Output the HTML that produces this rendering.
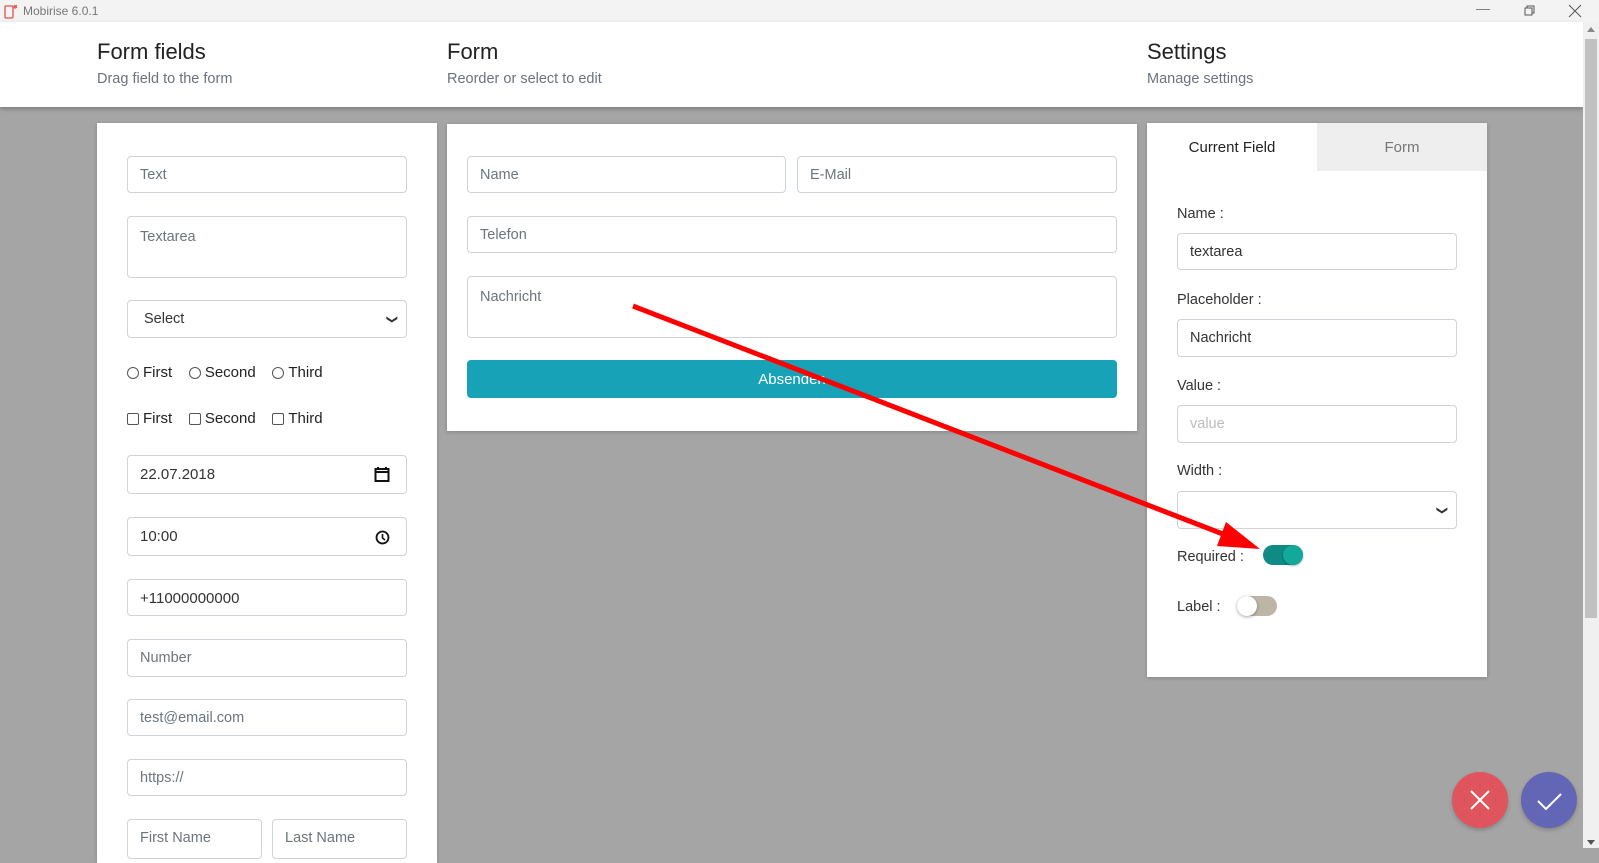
<!DOCTYPE html>
<html><head><meta charset="utf-8"><style>
*{box-sizing:border-box;margin:0;padding:0}
body{width:1599px;height:848px;overflow:hidden;background:#a5a5a5;font-family:"Liberation Sans",sans-serif;position:relative}
.abs{position:absolute}
.tb{left:0;top:0;width:1599px;height:22px;background:#f3f3f3;font-size:12px;color:#777}
.hdr{left:0;top:22px;width:1583px;height:85px;background:#fff;box-shadow:0 2px 4px rgba(0,0,0,.25)}
.h1{font-size:22px;color:#222}
.h2{font-size:14.5px;color:#6b7280}
.panel{background:#fff;box-shadow:0 1px 4px rgba(0,0,0,.2)}
.in{position:absolute;border:1px solid #ced4da;border-radius:4px;background:#fff;font-size:14.5px;color:#6c757d;padding-left:12px;line-height:37px}
.lbl{position:absolute;font-size:14.5px;color:#333;margin-top:2px}
.opt{position:absolute;font-size:15px;color:#222;display:flex;align-items:center}
.r{width:12px;height:12px;border:1px solid #555;border-radius:50%;display:inline-block;margin-right:4px}
.c{width:12px;height:12px;border:1px solid #555;border-radius:2px;display:inline-block;margin-right:4px}
.chev{position:absolute;right:10px;top:0;font-size:11px;color:#333;transform:rotate(90deg)}
</style></head><body>
<div class="abs tb"><svg class="abs" style="left:4px;top:3px" width="16" height="16"><rect x="1" y="3" width="8" height="12" rx="1" fill="none" stroke="#e05050" stroke-width="1.3"/><path d="M11 2v4M9 4h4M10 2l3 3M13 2l-3 3" stroke="#e05050" stroke-width="1"/></svg><span class="abs" style="left:23px;top:4px">Mobirise 6.0.1</span>
<span class="abs" style="left:1476px;top:0;font-size:14px">—</span>
<svg class="abs" style="left:1524px;top:5px" width="12" height="12"><rect x="1" y="3" width="7" height="7" fill="none" stroke="#555"/><path d="M3 3V1h7v7H8" fill="none" stroke="#555"/></svg>
<svg class="abs" style="left:1568px;top:4px" width="14" height="14"><path d="M1 1l12 12M13 1L1 13" stroke="#555"/></svg></div>
<div class="abs hdr">
<div class="abs h1" style="left:97px;top:17px">Form fields</div><div class="abs h2" style="left:97px;top:49px">Drag field to the form</div>
<div class="abs h1" style="left:447px;top:17px">Form</div><div class="abs h2" style="left:447px;top:49px">Reorder or select to edit</div>
<div class="abs h1" style="left:1147px;top:17px">Settings</div><div class="abs h2" style="left:1147px;top:49px">Manage settings</div>
</div>
<div class="abs" style="left:1583px;top:22px;width:16px;height:826px;background:#f0f0f0"><div class="abs" style="left:2px;top:17px;width:12px;height:579px;background:#c1c1c1"></div><div class="abs" style="left:4px;top:5px;border:4px solid transparent;border-bottom:5px solid #888;border-top:0"></div><div class="abs" style="left:4px;top:818px;border:4px solid transparent;border-top:5px solid #555;border-bottom:0"></div></div>

<div class="abs panel" style="left:97px;top:123px;width:340px;height:740px">
<div class="in" style="left:30px;top:33px;width:280px;height:37px">Text</div>
<div class="in" style="left:30px;top:93px;width:280px;height:62px;line-height:20px;padding-top:10px">Textarea</div>
<div class="in" style="left:30px;top:177px;width:280px;height:38px;color:#333;padding-left:16px">Select<span class="chev">&#10095;</span></div>
<div class="opt" style="left:30px;top:241px"><span class="r"></span>First&nbsp;&nbsp;&nbsp;&nbsp;<span class="r"></span>Second&nbsp;&nbsp;&nbsp;&nbsp;<span class="r"></span>Third</div>
<div class="opt" style="left:30px;top:287px"><span class="c"></span>First&nbsp;&nbsp;&nbsp;&nbsp;<span class="c"></span>Second&nbsp;&nbsp;&nbsp;&nbsp;<span class="c"></span>Third</div>
<div class="in" style="left:30px;top:332px;width:280px;height:39px;color:#333;font-size:15px">22.07.2018<svg class="abs" style="right:16px;top:10px" width="16" height="17"><rect x="1.5" y="3" width="13" height="12" fill="none" stroke="#111" stroke-width="2"/><path d="M1 6h14M4 1v3M12 1v3" stroke="#111" stroke-width="2"/></svg></div>
<div class="in" style="left:30px;top:394px;width:280px;height:39px;color:#333;font-size:15px">10:00<svg class="abs" style="right:16px;top:12px" width="15" height="15"><circle cx="7.5" cy="7.5" r="6" fill="none" stroke="#111" stroke-width="1.8"/><path d="M7.5 4v4l2.5 2" fill="none" stroke="#111" stroke-width="1.6"/></svg></div>
<div class="in" style="left:30px;top:456px;width:280px;height:37px;color:#333;font-size:15px">+11000000000</div>
<div class="in" style="left:30px;top:516px;width:280px;height:38px">Number</div>
<div class="in" style="left:30px;top:576px;width:280px;height:37px">test@email.com</div>
<div class="in" style="left:30px;top:636px;width:280px;height:37px">https://</div>
<div class="in" style="left:30px;top:696px;width:135px;height:40px">First Name</div>
<div class="in" style="left:175px;top:696px;width:135px;height:40px">Last Name</div>
</div>

<div class="abs panel" style="left:447px;top:124px;width:690px;height:307px">
<div class="in" style="left:20px;top:32px;width:319px;height:37px">Name</div>
<div class="in" style="left:350px;top:32px;width:320px;height:37px">E-Mail</div>
<div class="in" style="left:20px;top:92px;width:650px;height:37px">Telefon</div>
<div class="in" style="left:20px;top:152px;width:650px;height:62px;line-height:20px;padding-top:10px">Nachricht</div>
<div class="abs" style="left:20px;top:236px;width:650px;height:38px;background:#17a2b8;border-radius:4px;color:#fff;font-size:15px;text-align:center;line-height:40px">Absenden</div>
</div>

<div class="abs panel" style="left:1147px;top:123px;width:340px;height:554px">
<div class="abs" style="left:170px;top:0;width:170px;height:48px;background:#eee;color:#777;font-size:15px;text-align:center;line-height:50px">Form</div>
<div class="abs" style="left:0;top:0;width:170px;height:48px;color:#222;font-size:15px;text-align:center;line-height:50px">Current Field</div>
<div class="lbl" style="left:30px;top:81px">Name :</div>
<div class="in" style="left:30px;top:110px;width:280px;height:37px;color:#333">textarea</div>
<div class="lbl" style="left:30px;top:167px">Placeholder :</div>
<div class="in" style="left:30px;top:196px;width:280px;height:38px;color:#333">Nachricht</div>
<div class="lbl" style="left:30px;top:253px">Value :</div>
<div class="in" style="left:30px;top:282px;width:280px;height:38px;color:#bbb">value</div>
<div class="lbl" style="left:30px;top:338px">Width :</div>
<div class="in" style="left:30px;top:368px;width:280px;height:38px"><span class="chev">&#10095;</span></div>
<div class="lbl" style="left:30px;top:424px">Required :</div>
<div class="abs" style="left:116px;top:422px;width:40px;height:20px;border-radius:10px;background:#0f8a85"><div class="abs" style="left:20px;top:0;width:20px;height:20px;border-radius:50%;background:#12a89a;box-shadow:0 1px 2px rgba(0,0,0,.3)"></div></div>
<div class="lbl" style="left:30px;top:474px">Label :</div>
<div class="abs" style="left:90px;top:473px;width:40px;height:20px;border-radius:10px;background:#bdb6a6"><div class="abs" style="left:0;top:0;width:20px;height:20px;border-radius:50%;background:#fff;box-shadow:0 1px 3px rgba(0,0,0,.35)"></div></div>
</div>

<svg class="abs" style="left:0;top:0" width="1599" height="848">
<line x1="633" y1="306" x2="1228" y2="536" stroke="#f00" stroke-width="5"/>
<polygon points="1260,549 1217,546 1226,522" fill="#f00"/>
</svg>

<div class="abs" style="left:1452px;top:772px;width:56px;height:56px;border-radius:50%;background:#e0555d;box-shadow:0 2px 4px rgba(0,0,0,.2)"><svg width="56" height="56"><path d="M19 19l18 18M37 19L19 37" stroke="#fff" stroke-width="2"/></svg></div>
<div class="abs" style="left:1521px;top:772px;width:56px;height:56px;border-radius:50%;background:#6266b5;box-shadow:0 2px 4px rgba(0,0,0,.2)"><svg width="56" height="56"><path d="M17 29l8 8 15-15" fill="none" stroke="#fff" stroke-width="2"/></svg></div>
</body></html>
